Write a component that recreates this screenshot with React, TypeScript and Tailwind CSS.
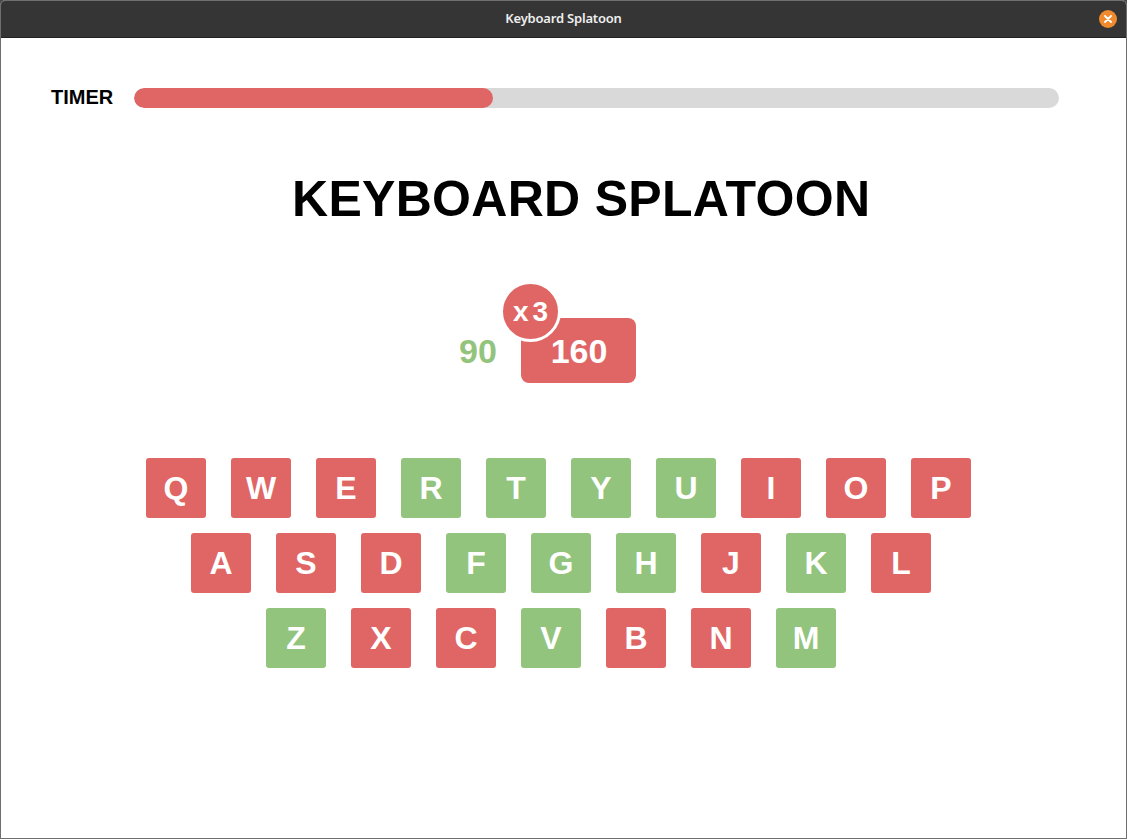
import React from "react";

const RED = "bg-[#e06666]";
const GREEN = "bg-[#93c47d]";

type K = [string, boolean];
const rows: { ml: string; keys: K[] }[] = [
  {
    ml: "ml-[145px]",
    keys: [
      ["Q", false], ["W", false], ["E", false], ["R", true], ["T", true],
      ["Y", true], ["U", true], ["I", false], ["O", false], ["P", false],
    ],
  },
  {
    ml: "ml-[190px]",
    keys: [
      ["A", false], ["S", false], ["D", false], ["F", true], ["G", true],
      ["H", true], ["J", false], ["K", true], ["L", false],
    ],
  },
  {
    ml: "ml-[265px]",
    keys: [
      ["Z", true], ["X", false], ["C", false], ["V", true], ["B", false],
      ["N", false], ["M", true],
    ],
  },
];

export default function App() {
  return (
    <div className="w-[1127px] h-[839px] bg-[#4a4a4a] overflow-hidden">
      <div className="w-[1127px] h-[839px] flex flex-col border border-[#6f6f6f] rounded-t-[5px] overflow-hidden bg-white">
        {/* Title bar */}
        <div className="relative h-[37px] shrink-0 bg-[#353535] border-b border-[#232323] flex items-center justify-center">
          <span
            className="text-[13px] font-semibold text-[#eeeeee] tracking-[-0.2px]"
            style={{ fontFamily: '"Noto Sans", "DejaVu Sans", sans-serif' }}
          >
            Keyboard Splatoon
          </span>
          <div className="absolute right-[9px] top-[9px] w-[18px] h-[18px] rounded-full bg-[#ef8a2e] flex items-center justify-center">
            <svg width="8" height="8" viewBox="0 0 8 8">
              <path d="M1 1 L7 7 M7 1 L1 7" stroke="white" strokeWidth="1.8" strokeLinecap="round" />
            </svg>
          </div>
        </div>

        {/* Content */}
        <div
          className="flex-1 flex flex-col bg-white"
          style={{ fontFamily: '"Liberation Sans", Arial, Helvetica, sans-serif' }}
        >
          {/* Timer */}
          <div className="mt-[50px] flex items-center pl-[50px] h-[20px]">
            <div className="w-[83px] text-[20px] leading-none font-bold text-black -mt-[2px]">TIMER</div>
            <div className="w-[925px] h-[20px] rounded-full bg-[#d9d9d9] overflow-hidden">
              <div className="h-full w-[359px] rounded-full bg-[#e06666]" />
            </div>
          </div>

          {/* Title */}
          <div className="mt-[66px] ml-[291px] text-[50px] leading-none font-bold text-black whitespace-nowrap tracking-[0.3px]">
            KEYBOARD SPLATOON
          </div>

          {/* Score */}
          <div className="mt-[94px] ml-[458px] flex items-center h-[65px]">
            <div className="w-[62px] text-[34px] font-bold text-[#93c47d] leading-none">90</div>
            <div className={`relative w-[115px] h-[65px] rounded-[8px] ${RED} flex items-center justify-center`}>
              <span className="text-[34px] font-bold text-white leading-none mt-[1px] ml-[1px]">160</span>
              <div className={`absolute left-[-21px] top-[-37px] w-[61px] h-[61px] rounded-full ${RED} border-[3px] border-white flex items-center justify-center`}>
                <span className="text-[28px] font-bold text-white leading-none tracking-[4px] ml-[4px]">x3</span>
              </div>
            </div>
          </div>

          {/* Keyboard */}
          <div className="mt-[75px] flex flex-col gap-[15px]">
            {rows.map((row, i) => (
              <div key={i} className={`flex gap-[25px] ${row.ml}`}>
                {row.keys.map(([ch, g]) => (
                  <div
                    key={ch}
                    className={`w-[60px] h-[60px] rounded-[3px] ${g ? GREEN : RED} flex items-center justify-center text-[32px] font-bold text-white leading-none`}
                  >
                    {ch}
                  </div>
                ))}
              </div>
            ))}
          </div>
        </div>
      </div>
    </div>
  );
}
